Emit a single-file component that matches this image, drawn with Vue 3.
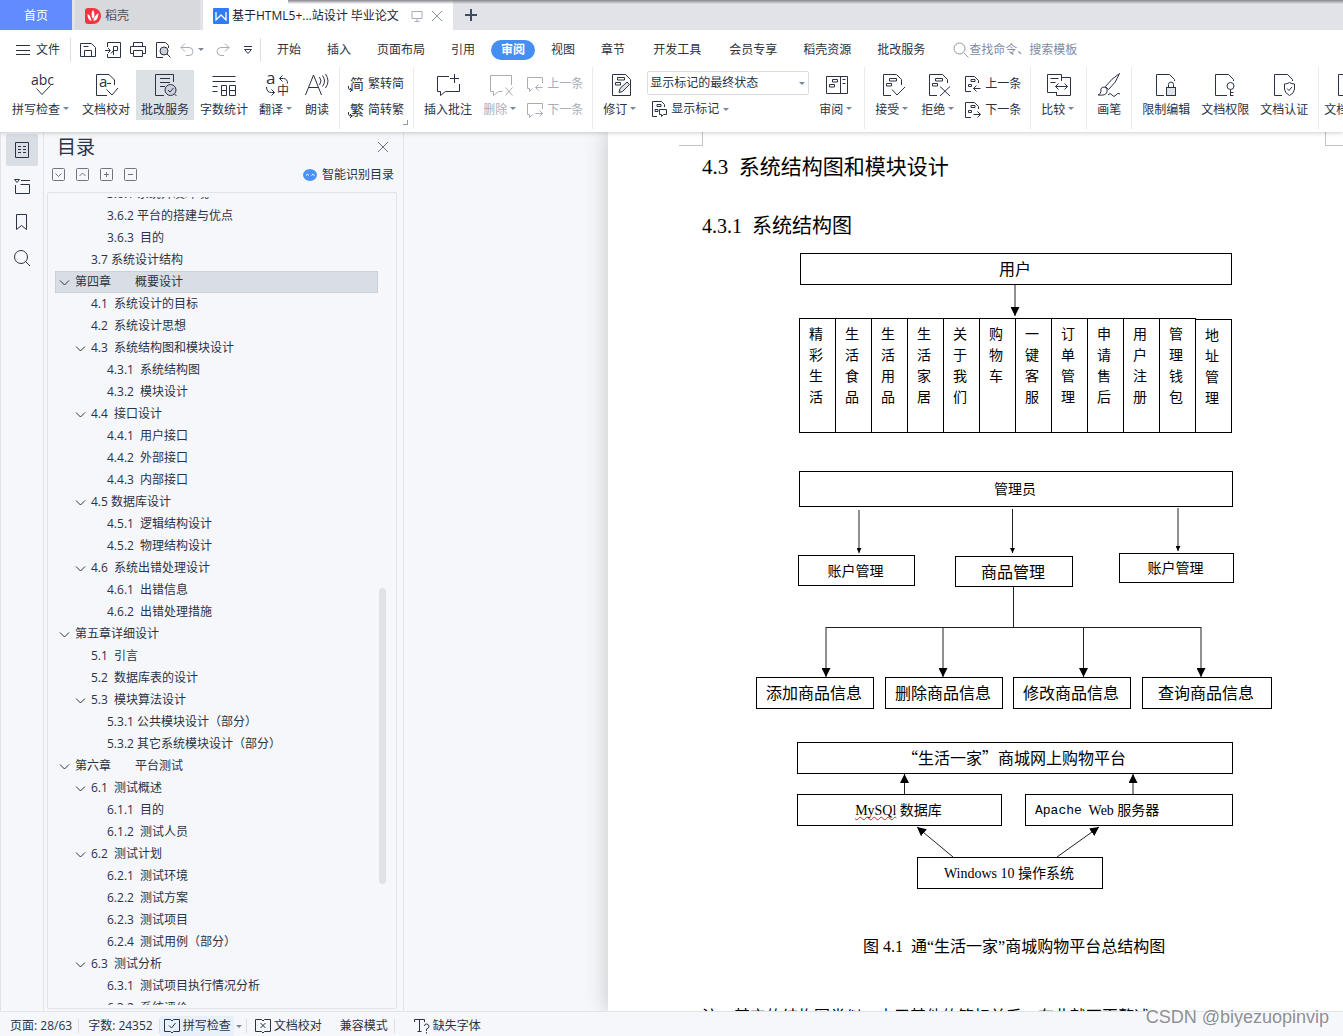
<script setup>
import { h } from 'vue'

/* Small boxes that stand for tracked text inside a document glyph */
const marks = 'M8.5 5.5h7v2.5h-7zM5.5 10.5h5v2.5h-5z'
const marksSmall = 'M6 3.5h4v2H6zM3.5 8.5h3v2h-3z'
const txt = (x, y, size, value) => ['text', { x, y, 'font-size': size, class: 'glyph' }, value]

const icons = {
  spell: [24, txt(1, 12, 14, 'abc'), 'M6.5 15.5 12 21.500l8.500-9'],
  proof: [24, 'M13 22.500H2.500V1.500H15l5.500 5.500v5', txt(5, 14, 15, 'a'), 'M13 10.500h4M12.500 16.500 18 22l6-7'],
  batch: [24, 'M11 22.500H2.500V1.500h18V9M7 5.500h10M7 9.500h10M7 13.500h5', ['circle', { cx: 17.5, cy: 17, r: 5.5, fill: '#c9cfda' }], 'M15 17l2 2 3.500-4M21.500 21l2 2'],
  count: [24, 'M.5 3.500h23M.5 8.500h23M.5 13.500h5M.5 18.500h5M9.500 12.500h5v10h-5zM9.500 17.500h5M17.500 12.500h6v10h-6zM17.500 17.500h6'],
  translate: [24, txt(1, 11, 17, 'a'), txt(12, 22, 12, '中'), 'M14.500 5.500h4q4 0 4 5M17.500 2.500l-3 3 3 3M1.500 14q0 5.500 5 5.500h3M6.500 16.500l3 3-3 3'],
  read: [24, 'M.5 22 8.500 2l8 20M3.500 14.500h10M14.500 4q3 4 0 8M17.500 2.500q4 5.500 0 11M20.500 1q5 7 0 14'],
  toSimple: [16, txt(2, 13, 14, '简'), 'M.5 10v2q0 2 3 2M2 12l2 2-2 2'],
  toTrad: [16, txt(2, 13, 14, '繁'), 'M.5 10v2q0 2 3 2M2 12l2 2-2 2'],
  addNote: [24, 'M13 3.500H1.500v15h3v4l5-4h14V11M18.500 1v9M14 5.500h9'],
  delNote: [24, 'M22.500 12V2.500h-21v16h3v4l5-4h4M16.500 14.500l7 8M23.500 14.500l-7 8'],
  prevNote: [16, 'M15.500 7V1.500H.5v11h2v3l3-3M15.500 11.500h-7M11.500 8.500l-3 3 3 3'],
  nextNote: [16, 'M15.500 7V1.500H.5v11h2v3l3-3M8.500 11.500h7M12.500 8.500l3 3-3 3'],
  revise: [24, 'M21.500 9V22.500h-18V1.500h13l5 5V9', 'M8.500 4.500h7v2.500h-7zM6.500 9.500h5v2.500h-5z', ['path', { d: 'M10 19.500l1-4 7-6.500 2.500 2.500-7 7z', fill: '#dfe2e8' }]],
  showMarks: [16, 'M6 15.500H1.500V.5h9l3 3V6', 'M6 3.500h4v2H6zM4 8.500h3v2H4z', 'M8.500 8.500h7v5h-3l-2 2v-2h-2z'],
  reviewPane: [24, 'M1.500 3.500h21v17h-21zM15.500 3.500v17M7.500 6.500h5v2.500h-5zM4.500 11.500h5v2.500h-5zM17.500 6.500h3M17.500 10.500h3'],
  accept: [24, 'M10 22.500H2.500V1.500h13l5 5V12', marks, 'M11 16.500l5 5.500 8-8'],
  reject: [24, 'M10 22.500H2.500V1.500h13l5 5V10', marks, 'M13 13.500l10 9.500M23 13.500L13 23'],
  prevDoc: [16, 'M6 15.500H.5V.5h9l4 4V7', marksSmall, 'M15.500 12.500h-7M11.500 9.500l-3 3 3 3'],
  nextDoc: [16, 'M6 15.500H.5V.5h9l4 4V7', marksSmall, 'M8.500 12.500h7M12.500 9.500l3 3-3 3'],
  compare: [24, 'M14.500 8V1.500H.5v18h9M15 4.500h8.500v18h-14V19M3.500 5.500h8M3.500 9.500h5M8.500 13.500h12M11.500 10.500l-3 3 3 3M17.500 10.500l3 3-3 3'],
  brush: [24, 'M22.500.5q-8 5-14 13l3 3q8-7 11-16zM8 14q-5 0-4 4 0 3-3 4 8 1 9-3 1-3-2-5zM11 22q2-3 4 0t4 0 4-1'],
  lock: [24, 'M10 22.500H2.500V1.500h13l5 5V8', ['rect', { x: 12.5, y: 14.5, width: 9, height: 8, fill: '#dfe2e8' }], 'M14.500 14V11.500q0-2.500 2.500-2.500t2.500 2.500V14'],
  key: [24, 'M14 22.500H2.500V1.500h13l5 5V8', ['circle', { cx: 17.5, cy: 13, r: 3.5 }], 'M17.500 16.500v6.500M17.500 19.500h3M17.500 22.500h3'],
  shield: [24, 'M10 22.500H2.500V1.500h13l5 5V8', 'M17.500 9.500q2.500 1.500 5 1.500v5q0 4-5 6.500-5-2.500-5-6.500v-5q2.500 0 5-1.500zM15 15.500l2 2 3-3.500'],
  doc: [24, 'M10 22.500H2.500V1.500h13l5 5V8'],
  burger: [16, 'M1 3.500h14M1 8.500h14M1 12.500h14'],
  save: [16, 'M.5 14.500V1.500h11l4 4v9zM4.500 14.500v-6h7v6M3.500 4.500h5'],
  exportPdf: [16, 'M2.500 5V.5h13v15h-13V12M0 8.500h5M3 6l2.500 2.500L3 11M8.500 13V4.500h4v4h-4L6 11.500'],
  print: [16, 'M3.500 5V.5h9V5M3.500 11.500h-3V4.500h15v7h-3M3.500 8.500h9v6h-9z'],
  preview: [16, 'M8 15.500H1.500V.5h9l3 3V6', ['circle', { cx: 9, cy: 9, r: 4, fill: '#cdd2da' }], 'M12 12l3.500 3.500'],
  undo: [16, 'M5 1.500l-4 4 4 4M1 5.500h8q4 0 4 4t-4 4H6'],
  redo: [16, 'M10 1.500l4 4-4 4M14 5.500H6q-4 0-4 4t4 4h3'],
  more: [16, 'M4 4.500h8M4.500 7.500l3.500 4 3.500-4z'],
  search: [16, ['circle', { cx: 6.5, cy: 6.5, r: 5.5 }], 'M10.500 10.500l5 5'],
  screen: [16, 'M3 3.500h10v7H3zM8 10.500v3M5.500 13.500h5'],
  close: [16, 'M3 3l10 10M13 3L3 13'],
  outline: [16, 'M1.500.5h13v15h-13zM4 4.500h3M4 7.500h3M4 10.500h3M9 4.500h3M9 7.500h3M9 10.500h3'],
  chapter: [16, 'M.5 1.500h5l-2.500 3zM7 2.500h9M1.500 7v8.500h14v-9h-9'],
  bookmark: [16, 'M2.500.5h10v15l-5-4-5 4z'],
  find: [16, ['circle', { cx: 7, cy: 7, r: 6.5 }], 'M11.500 11.500l4.500 4.500'],
  down: [14, ['rect', { x: 0.5, y: 0.5, width: 12, height: 12, rx: 1 }], 'M3.500 5.500l3 3 3-3'],
  up: [14, ['rect', { x: 0.5, y: 0.5, width: 12, height: 12, rx: 1 }], 'M3.500 8l3-3 3 3'],
  plus: [14, ['rect', { x: 0.5, y: 0.5, width: 12, height: 12, rx: 1 }], 'M4 6.500h5M6.500 4v5'],
  minus: [14, ['rect', { x: 0.5, y: 0.5, width: 12, height: 12, rx: 1 }], 'M4 6.500h5'],
  robot: [14, ['ellipse', { cx: 7, cy: 7, rx: 7, ry: 6, fill: '#4a93f5', stroke: 'none' }], ['path', { d: 'M3 7.500q1.500-2.500 3 0M8.500 7.500q1.500-2.500 3 0', stroke: '#fff' }]],
  bookCheck: [16, 'M6.500 1.500h-6v12h6l1.500 1.500 1.500-1.500h6v-12h-6L8 3zM5 7.500l2.500 2.500 4-5'],
  bookCross: [16, 'M6.500 1.500h-6v12h6l1.500 1.500 1.500-1.500h6v-12h-6L8 3zM5.500 5l5 5M10.500 5l-5 5'],
  missing: [16, 'M.5 4V1.500h10V4M5.500 1.500v12M3.500 13.500h4M10.500 8q0-2 2-2t2.500 2-2.500 3v2M12.500 14v1.500'],
  chevron: [10, 'M1 3.500l4.500 4.500L10 3.500'],
}

const Icon = ({ name }) => {
  const [size, ...parts] = icons[name]
  return h(
    'svg',
    { viewBox: `0 0 ${size} ${size}`, width: size, height: size, fill: 'none', stroke: 'currentColor', 'aria-hidden': 'true' },
    parts.map((p) => (typeof p === 'string' ? h('path', { d: p }) : h(p[0], p[1], p[2]))),
  )
}
Icon.props = ['name']

const quick = ['save', 'exportPdf', 'print', 'preview']
const tabs = [
  { t: '开始' }, { t: '插入' }, { t: '页面布局' }, { t: '引用' }, { t: '审阅', on: true }, { t: '视图' }, { t: '章节' },
  { t: '开发工具', extra: true }, { t: '会员专享', extra: true }, { t: '稻壳资源' }, { t: '批改服务' },
]

const groups = [
  [
    { icon: 'spell', t: '拼写检查', caret: true }, { icon: 'proof', t: '文档校对' }, { icon: 'batch', t: '批改服务', on: true },
    { icon: 'count', t: '字数统计' }, { icon: 'translate', t: '翻译', caret: true }, { icon: 'read', t: '朗读' },
  ],
  [{ rows: [{ icon: 'toSimple', t: '繁转简' }, { icon: 'toTrad', t: '简转繁' }], corner: true }],
  [
    { icon: 'addNote', t: '插入批注' }, { icon: 'delNote', t: '删除', caret: true, off: true },
    { rows: [{ icon: 'prevNote', t: '上一条', off: true }, { icon: 'nextNote', t: '下一条', off: true }] },
  ],
  [
    { icon: 'revise', t: '修订', caret: true },
    { select: '显示标记的最终状态', rows: [{ icon: 'showMarks', t: '显示标记', caret: true }] },
    { icon: 'reviewPane', t: '审阅', caret: true },
  ],
  [
    { icon: 'accept', t: '接受', caret: true }, { icon: 'reject', t: '拒绝', caret: true },
    { rows: [{ icon: 'prevDoc', t: '上一条' }, { icon: 'nextDoc', t: '下一条' }] },
  ],
  [{ icon: 'compare', t: '比较', caret: true }],
  [{ icon: 'brush', t: '画笔' }],
  [{ icon: 'lock', t: '限制编辑' }, { icon: 'key', t: '文档权限' }, { icon: 'shield', t: '文档认证' }],
  [{ icon: 'doc', t: '文档定稿' }],
]

const toc = [
  [3, '3.6.1 系统开发环境'], [3, '3.6.2 平台的搭建与优点'], [3, '3.6.3  目的'], [2, '3.7 系统设计结构'],
  [1, '第四章　　概要设计', 1], [2, '4.1  系统设计的目标'], [2, '4.2  系统设计思想'],
  [2, '4.3  系统结构图和模块设计', 1], [3, '4.3.1  系统结构图'], [3, '4.3.2  模块设计'],
  [2, '4.4  接口设计', 1], [3, '4.4.1  用户接口'], [3, '4.4.2  外部接口'], [3, '4.4.3  内部接口'],
  [2, '4.5 数据库设计', 1], [3, '4.5.1  逻辑结构设计'], [3, '4.5.2  物理结构设计'],
  [2, '4.6  系统出错处理设计', 1], [3, '4.6.1  出错信息'], [3, '4.6.2  出错处理措施'],
  [1, '第五章详细设计', 1], [2, '5.1  引言'], [2, '5.2  数据库表的设计'],
  [2, '5.3  模块算法设计', 1], [3, '5.3.1 公共模块设计（部分）'], [3, '5.3.2 其它系统模块设计（部分）'],
  [1, '第六章　　平台测试', 1], [2, '6.1  测试概述', 1], [3, '6.1.1  目的'], [3, '6.1.2  测试人员'],
  [2, '6.2  测试计划', 1], [3, '6.2.1  测试环境'], [3, '6.2.2  测试方案'], [3, '6.2.3  测试项目'], [3, '6.2.4  测试用例（部分）'],
  [2, '6.3  测试分析', 1], [3, '6.3.1  测试项目执行情况分析'], [3, '6.3.2  系统评价'],
]

/* Diagram nodes: x, y, width, height, text, larger type */
const nodes = [
  [192, 13, 432, 32, '用户', true],
  [191, 231, 434, 36, '管理员'],
  [190, 315, 117, 31, '账户管理'],
  [347, 316, 118, 31, '商品管理', true],
  [511, 313, 115, 30, '账户管理'],
  [148, 437, 118, 32, '添加商品信息', true],
  [277, 437, 118, 32, '删除商品信息', true],
  [405, 437, 118, 32, '修改商品信息', true],
  [534, 437, 130, 32, '查询商品信息', true],
  [189, 502, 436, 32, '“生活一家”商城网上购物平台', true],
].map(([x, y, w, hgt, t, big]) => ({ t, big, box: box(x, y, w, hgt) }))

function box(x, y, w, hgt) {
  return { left: `${x}px`, top: `${y}px`, width: `${w}px`, height: `${hgt}px` }
}

const features = ['精彩生活', '生活食品', '生活用品', '生活家居', '关于我们', '购物车', '一键客服', '订单管理', '申请售后', '用户注册', '管理钱包', '地址管理']
const arrows = ['M407 45v31', 'M218 387v50', 'M335 387v50', 'M475.500 387v50', 'M593 387v50', 'M296.500 554v-20', 'M525 554v-20', 'M345 617l-36-30', 'M449 617l42-30']
const thinArrows = ['M251 270v43', 'M404.500 269v44', 'M570 268v43']
</script>

<template>
  <div class="app">
    <header>
      <div class="titlebar">
        <button class="home">首页</button>
        <button class="tab docer">
          <svg width="16" height="16" viewBox="0 0 16 16" aria-hidden="true">
            <path d="M0 3q0-3 3-3h5a8 8 0 0 1 0 16H3q-3 0-3-3z" fill="#f5333f" />
            <path d="M8 2q3 4 0 9-3-5 0-9zM2.500 6q3 1 4 7-4-1-4-7zM13.500 5q0 7-5 8 0-5 5-8z" fill="#fff" />
          </svg>
          稻壳
        </button>
        <div class="tab current">
          <svg width="16" height="16" viewBox="0 0 16 16" aria-hidden="true">
            <rect width="16" height="16" rx="1" fill="#2f7cf6" />
            <path d="M3 4v8l5-5 5 5V4" fill="none" stroke="#fff" stroke-width="1.300" />
          </svg>
          <span class="name">基于HTML5+...站设计 毕业论文</span>
          <Icon name="screen" />
          <button class="x" aria-label="关闭标签"><Icon name="close" /></button>
        </div>
        <button class="add" aria-label="新建标签">
          <svg width="12" height="12" viewBox="0 0 12 12"><path d="M6 0v12M0 6h12" stroke="#3f4a63" stroke-width="2" /></svg>
        </button>
        <div class="edge"></div>
      </div>

      <nav class="menubar">
        <button class="file"><Icon name="burger" />文件</button>
        <div class="quick">
          <button v-for="q in quick" :key="q" :aria-label="q"><Icon :name="q" /></button>
          <button class="dim" aria-label="撤销"><Icon name="undo" /><i class="caret"></i></button>
          <button class="dim" aria-label="恢复"><Icon name="redo" /></button>
          <button aria-label="更多"><Icon name="more" /></button>
        </div>
        <div class="tabs">
          <a v-for="m in tabs" :key="m.t" href="#" :class="{ on: m.on, extra: m.extra }">{{ m.t }}</a>
        </div>
        <label class="search"><Icon name="search" /><input type="text" placeholder="查找命令、搜索模板" aria-label="查找命令" /></label>
      </nav>

      <div class="ribbon">
        <div v-for="(g, gi) in groups" :key="gi" class="group">
          <template v-for="(b, bi) in g" :key="bi">
            <div v-if="b.rows" class="stack" :class="{ picker: b.select }">
              <select v-if="b.select" aria-label="显示状态"><option>{{ b.select }}</option></select>
              <button v-for="r in b.rows" :key="r.t" class="small" :class="{ off: r.off }">
                <Icon :name="r.icon" />{{ r.t }}<i v-if="r.caret" class="caret"></i>
              </button>
              <i v-if="b.corner" class="corner"></i>
            </div>
            <button v-else class="big" :class="{ on: b.on, off: b.off }">
              <Icon :name="b.icon" />
              <span>{{ b.t }}<i v-if="b.caret" class="caret"></i></span>
            </button>
          </template>
        </div>
      </div>
    </header>

    <main>
      <div class="rail">
        <button class="on" aria-label="目录"><Icon name="outline" /></button>
        <button aria-label="章节"><Icon name="chapter" /></button>
        <button aria-label="书签"><Icon name="bookmark" /></button>
        <button aria-label="查找"><Icon name="find" /></button>
      </div>

      <aside>
        <div class="head">
          <h2>目录</h2>
          <button aria-label="关闭"><Icon name="close" /></button>
        </div>
        <div class="tools">
          <button v-for="n in ['down', 'up', 'plus', 'minus']" :key="n" :aria-label="n"><Icon :name="n" /></button>
          <a href="#"><Icon name="robot" />智能识别目录</a>
        </div>
        <div class="outline">
          <ul>
            <li v-for="([lv, t, open], i) in toc" :key="i" :class="['lv' + lv, { sel: i === 4 }]">
              <span class="twist"><Icon v-if="open" name="chevron" /></span>{{ t }}
            </li>
          </ul>
          <div class="thumb"></div>
        </div>
      </aside>

      <section class="desk">
        <article>
          <div class="crops"><i class="crop left"></i><i class="crop right"></i></div>
          <h3>4.3&nbsp; 系统结构图和模块设计</h3>
          <h4>4.3.1&nbsp; 系统结构图</h4>
          <div class="canvas">
            <svg class="lines" width="735" height="694" aria-hidden="true">
              <defs>
                <marker id="head" markerWidth="9" markerHeight="9" refX="9" refY="4.500" orient="auto" markerUnits="userSpaceOnUse"><path d="M0 0l9 4.500L0 9z" /></marker>
                <marker id="thin" markerWidth="5" markerHeight="5" refX="5" refY="2.500" orient="auto" markerUnits="userSpaceOnUse"><path d="M0 0l5 2.500L0 5z" /></marker>
              </defs>
              <path v-for="d in arrows" :key="d" :d="d" marker-end="url(#head)" />
              <path v-for="d in thinArrows" :key="d" :d="d" marker-end="url(#thin)" />
              <path d="M405.500 347v40M218 387.500h375" />
            </svg>
            <div v-for="(n, i) in nodes" :key="i" class="node" :class="{ bigtype: n.big }" :style="n.box">{{ n.t }}</div>
            <div class="features">
              <div v-for="f in features" :key="f"><span>{{ f }}</span></div>
            </div>
            <div class="node mixed" :style="box(189, 554, 205, 32)"><span class="typo">MySQl</span>&nbsp;数据库</div>
            <div class="node mixed start" :style="box(417, 554, 208, 32)"><code>Apache</code>&nbsp; Web 服务器</div>
            <div class="node mixed" :style="box(309, 617, 186, 32)">Windows 10 操作系统</div>
          </div>
          <p class="caption">图 4.1&nbsp; 通“生活一家”商城购物平台总结构图</p>
          <p class="body">注：其它的结构图类似，由于其他的管标关系，在此就不再赘述</p>
        </article>
      </section>
    </main>

    <footer>
      <span class="cell">页面: 28/63</span>
      <span class="cell words">字数: 24352</span>
      <button class="spell"><Icon name="bookCheck" />拼写检查</button>
      <button class="cell pick" aria-label="拼写选项"><i class="caret"></i></button>
      <button class="proof"><Icon name="bookCross" />文档校对</button>
      <span class="cell">兼容模式</span>
      <button class="fonts"><Icon name="missing" />缺失字体</button>
      <span class="watermark">CSDN @biyezuopinvip</span>
    </footer>
  </div>
</template>

<style>
body {
  margin: 0;
}
</style>

<style scoped>
.app {
  display: flex;
  flex-direction: column;
  height: 100vh;
  overflow: hidden;
  background: #f5f7fa;
  color: #2a3245;
  font: 12px/18px "Open Sans", "Noto Sans CJK SC", sans-serif;
}
button, input, select {
  font: inherit;
  color: inherit;
}
button {
  padding: 0;
  border: 0;
  background: none;
  white-space: nowrap;
}
a {
  color: inherit;
  text-decoration: none;
}
h2, h3, h4, p, ul {
  margin: 0;
  padding: 0;
  font-weight: 400;
}
svg {
  flex: none;
  display: block;
  overflow: visible;
}
.app :deep(.glyph) {
  fill: currentColor;
  stroke: none;
}
.caret {
  display: inline-block;
  flex: none;
  margin: 0 2px 3px 3px;
  border: 3px solid transparent;
  border-top-color: #7b859b;
  border-bottom: 0;
}

/* Title bar */
header {
  position: relative;
  z-index: 1;
  flex: none;
  background: #fff;
  box-shadow: 0 1px 4px rgba(60, 64, 72, 0.25);
}
.titlebar {
  position: relative;
  display: flex;
  gap: 3px;
  height: 30px;
  background: #e1e3e8;
}
.home {
  width: 72px;
  padding-top: 2px;
  background: #618bff;
  color: #fff;
}
.tab {
  display: flex;
  align-items: center;
  box-sizing: border-box;
  padding: 2px 0 0 10px;
}
.docer {
  width: 125px;
  gap: 4px;
  background: #d8d9dd;
  color: #4a5061;
}
.current {
  width: 250px;
  background: #fff;
  color: #1d222e;
}
.current .name {
  flex: 1;
  margin-left: 3px;
  white-space: nowrap;
}
.current > svg:not(:first-child), .x {
  margin-right: 4px;
  color: #a5adbe;
}
.x {
  margin-right: 8px;
  color: #8f99ae;
}
.add {
  width: 30px;
  display: grid;
  place-items: center;
}
.edge {
  position: absolute;
  top: 0;
  left: 288px;
  right: 0;
  height: 4px;
  background: linear-gradient(#85878c, #e1e3e800);
}

/* Menu bar */
.menubar {
  display: flex;
  align-items: center;
  box-sizing: border-box;
  height: 37px;
  padding-top: 2px;
}
.file {
  display: flex;
  align-items: center;
  gap: 5px;
  height: 24px;
  padding: 0 10px 0 15px;
  border-right: 1px solid #dcdee4;
}
.quick {
  display: flex;
  align-items: center;
  gap: 9px;
  box-sizing: border-box;
  width: 190px;
  height: 24px;
  padding-left: 9px;
  border-right: 1px solid #dcdee4;
}
.quick button {
  display: flex;
  align-items: center;
}
.quick .dim {
  color: #a9adb8;
}
.quick .dim .caret {
  margin: 0 2px;
}
.tabs {
  display: flex;
  gap: 6px;
  margin-left: 6px;
}
.tabs a {
  padding: 1px 10px;
  border-radius: 10px;
}
.tabs .on {
  background: #468ff2;
  color: #fff;
  font-weight: 700;
}
.tabs .extra {
  margin-left: 2px;
}
.search {
  display: flex;
  align-items: center;
  margin-left: 18px;
  color: #8c96ab;
}
.search input {
  width: 130px;
  padding: 0;
  border: 0;
  outline: 0;
}
.search input::placeholder {
  color: #7f8aa2;
}

/* Ribbon */
.ribbon {
  display: flex;
  height: 65px;
  padding-left: 2px;
  overflow: hidden;
}
.group {
  display: flex;
  flex: none;
  gap: 1px;
  height: 62px;
  padding: 0 5px;
  border-right: 1px solid #eaebef;
}
.group:last-child {
  padding: 0;
}
.big {
  display: flex;
  flex-direction: column;
  align-items: center;
  height: 50px;
  margin-top: 3px;
  padding: 3px 5px 0;
}
.big span {
  display: flex;
  align-items: center;
  margin-top: 4px;
}
.big.on {
  background: #dce1e6;
}
.off {
  color: #a9adb5;
}
.stack {
  position: relative;
  display: flex;
  flex-direction: column;
  align-items: flex-start;
  gap: 2px;
  padding: 5px 4px 0 3px;
}
.small {
  display: flex;
  align-items: center;
  gap: 4px;
  height: 24px;
}
.small .caret {
  margin: 0;
}
.picker {
  padding-top: 4px;
}
.picker select {
  width: 162px;
  height: 24px;
  padding: 0 2px;
  border: 1px solid #d9dce2;
  border-radius: 2px;
  background: #fff;
  appearance: none;
}
.picker::after {
  content: "";
  position: absolute;
  top: 15px;
  right: 8px;
  border: 3px solid transparent;
  border-top-color: #7b859b;
  border-bottom: 0;
}
.picker .small {
  margin-left: 4px;
}
.corner {
  position: absolute;
  right: 0;
  bottom: 4px;
  width: 4px;
  height: 4px;
  border: solid #8f97a8;
  border-width: 0 1px 1px 0;
}

/* Navigation */
main {
  display: flex;
  flex: 1;
  min-height: 0;
}
.rail {
  display: flex;
  flex: none;
  flex-direction: column;
  align-items: center;
  gap: 4px;
  box-sizing: border-box;
  width: 44px;
  padding-top: 2px;
  border: solid #e1e3ea;
  border-width: 0 1px;
}
.rail button {
  display: grid;
  place-items: center;
  width: 32px;
  height: 32px;
  border-radius: 2px;
}
.rail .on {
  background: #d9dee5;
}
aside {
  display: flex;
  flex: none;
  flex-direction: column;
  box-sizing: border-box;
  width: 360px;
  padding: 0 6px 2px 3px;
  border-right: 1px solid #e1e3ea;
}
.head, .tools {
  display: flex;
  align-items: center;
}
.head {
  justify-content: space-between;
  height: 30px;
  padding: 0 6px 0 10px;
  color: #6b7385;
}
h2 {
  color: #2a3245;
  font-size: 19px;
  line-height: 28px;
}
.tools {
  gap: 10px;
  height: 25px;
  padding: 0 3px 5px 5px;
  color: #6d7482;
}
.tools a {
  display: flex;
  align-items: center;
  gap: 5px;
  margin-left: auto;
  color: #2a3245;
}
.outline {
  position: relative;
  flex: 1;
  min-height: 0;
  padding: 4px 0 3px;
  border: 1px solid #e1e3ea;
  border-radius: 2px;
  display: flex;
}
.outline ul {
  display: flex;
  flex: 1;
  flex-direction: column;
  overflow: hidden;
  list-style: none;
}
li {
  display: flex;
  flex: none;
  align-items: center;
  height: 22px;
  margin: 0 18px 0 7px;
  white-space: pre;
}
li:first-child {
  margin-top: -14px;
}
.lv1 {
  padding-left: 4px;
}
.lv2 {
  padding-left: 20px;
}
.lv3 {
  padding-left: 36px;
}
.sel {
  background: #d9dee5;
  box-shadow: inset 0 0 0 1px #c8d0d8;
}
.twist {
  flex: none;
  width: 16px;
}
.thumb {
  position: absolute;
  top: 395px;
  right: 10px;
  width: 7px;
  height: 296px;
  border-radius: 4px;
  background: #dfe3e6;
}

/* Document */
.desk {
  flex: 1;
  min-width: 0;
  padding-left: 204px;
  overflow: hidden;
}
article {
  height: 100%;
  overflow: hidden;
  background: #fff;
  box-shadow: 0 0 20px rgba(60, 60, 60, 0.28);
  color: #000;
  font-family: "Liberation Serif", "Noto Sans CJK SC", serif;
}
.crops {
  display: flex;
  justify-content: space-between;
  padding-left: 71px;
}
.crop {
  height: 13px;
  border: solid #c4c4c4;
}
.left {
  width: 23px;
  border-width: 0 1px 1px 0;
}
.right {
  width: 17px;
  border-width: 0 0 1px 1px;
}
h3, h4 {
  margin: 6px 0 0 94px;
  font-size: 21px;
  line-height: 30px;
}
h4 {
  margin-top: 30px;
  font-size: 20px;
  line-height: 28px;
}
.canvas {
  position: relative;
  height: 694px;
}
.lines {
  position: absolute;
  inset: 0;
  fill: none;
  stroke: #222;
}
.lines marker path {
  fill: #000;
  stroke: none;
}
.node {
  position: absolute;
  display: flex;
  align-items: center;
  justify-content: center;
  box-sizing: border-box;
  padding: 0 2px 2px 0;
  border: 1px solid #000;
  font: 14px/20px "Noto Sans CJK SC", sans-serif;
  white-space: nowrap;
}
.bigtype {
  font-size: 16px;
}
.mixed {
  padding: 2px 2px 0 0;
  font-family: "Liberation Serif", "Noto Sans CJK SC", serif;
}
.start {
  justify-content: flex-start;
  padding-left: 9px;
}
code {
  font: 13px/20px "Liberation Mono", monospace;
}
.typo {
  text-decoration: underline wavy #e02020 1px;
  text-decoration-skip-ink: none;
}
.features {
  position: absolute;
  left: 191px;
  top: 78px;
  display: flex;
  width: 433px;
  height: 115px;
}
.features div {
  flex: 1;
  margin-right: -1px;
  padding: 4px 0 0 9px;
  border: 1px solid #000;
  font: 14px/21px "Noto Sans CJK SC", sans-serif;
}
.features div:last-child {
  margin: 1px 0 0;
}
.features span {
  display: block;
  width: 14px;
  word-break: break-all;
}
.caption {
  padding-left: 255px;
  font-size: 16px;
  line-height: 26px;
}
.body {
  margin: 45px 0 0 94px;
  font-size: 16px;
  line-height: 24px;
}

/* Status bar */
footer {
  position: relative;
  display: flex;
  flex: none;
  align-items: center;
  height: 20px;
  padding: 4px 0 0 10px;
  border-top: 1px solid #e1e2ea;
}
footer button {
  display: flex;
  align-items: center;
  gap: 3px;
  height: 20px;
}
.cell {
  padding-right: 6px;
  border-right: 1px solid #dcdee4;
  line-height: 14px;
}
footer .words {
  padding-left: 9px;
}
.spell {
  padding: 0 3px 0 4px;
  background: #e8f0fb;
}
footer .pick {
  height: 14px;
  padding: 0 2px 0 0;
}
.pick .caret {
  margin: 0 2px;
}
.proof {
  margin: 0 18px 0 8px;
}
.fonts {
  margin-left: 19px;
}
.watermark {
  position: absolute;
  right: 14px;
  bottom: 7px;
  color: #8d8f93;
  font: 18px/24px "Liberation Sans", sans-serif;
  text-shadow: -1px -1px 0 #fff;
}
</style>
